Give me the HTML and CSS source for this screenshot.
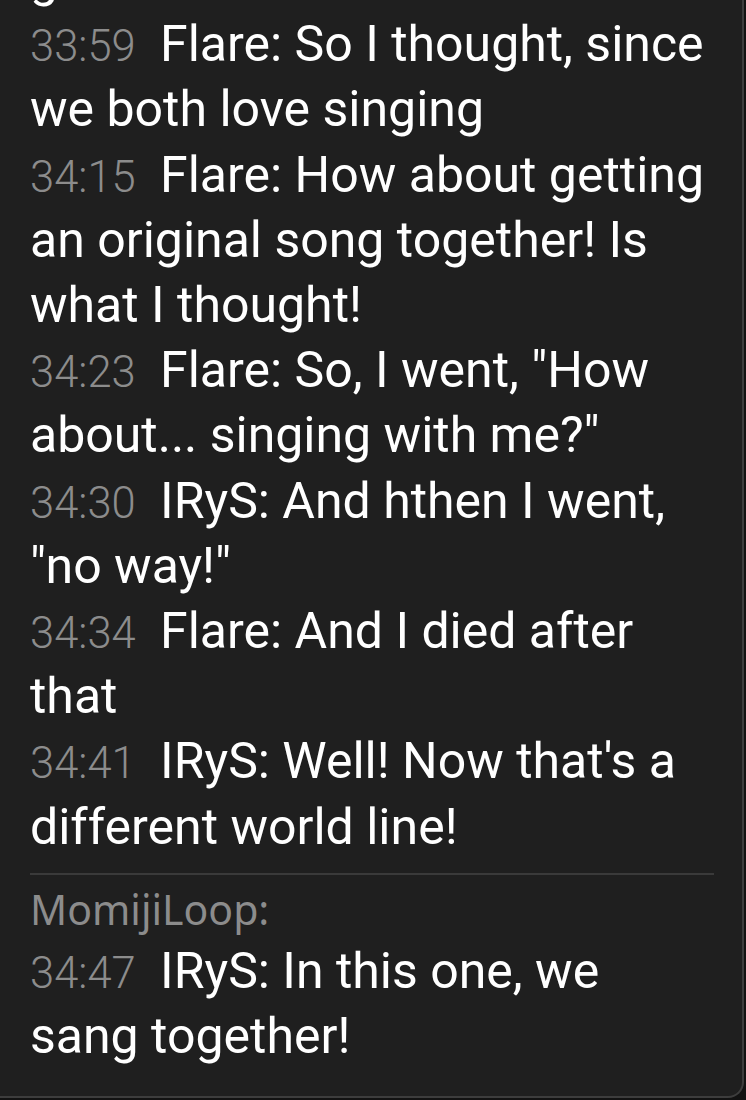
FILE: index.html
```html
<!DOCTYPE html>
<html>
<head>
<meta charset="utf-8">
<link rel="stylesheet" href="styles.css">
</head>
<body>
<div class="panel">
  <div class="group">
    <div class="msg prev">get it</div>
    <div class="msg"><span class="ts">33:59</span> Flare: So I thought, since we both love singing</div>
    <div class="msg"><span class="ts">34:15</span> Flare: How about getting an original song together! Is what I thought!</div>
    <div class="msg"><span class="ts">34:23</span> Flare: So, I went, "How about... singing with me?"</div>
    <div class="msg"><span class="ts">34:30</span> IRyS: And hthen I went, "no way!"</div>
    <div class="msg"><span class="ts">34:34</span> Flare: And I died after that</div>
    <div class="msg"><span class="ts">34:41</span> IRyS: Well! Now that's a different world line!</div>
  </div>
  <div class="group second">
    <div class="author">MomijiLoop:</div>
    <div class="msg"><span class="ts">34:47</span> IRyS: In this one, we sang together!</div>
  </div>
</div>
</body>
</html>
```
FILE: styles.css
```css
html, body {
  margin: 0;
  padding: 0;
  background: #121212;
  height: 1100px;
  overflow: hidden;
}
.panel {
  display: flow-root;
  box-sizing: border-box;
  width: 744px;
  height: 1098px;
  background: #1f1f1f;
  border-right: 2px solid #3d3d3d;
  border-bottom: 2px solid #3d3d3d;
  border-bottom-right-radius: 16px;
  padding: 0 28px 0 30px;
  font-family: Roboto, "Liberation Sans", sans-serif;
  color: #ffffff;
}
.group {
  padding-bottom: 13px;
}
.prev {
  margin-top: -53px;
}
.msg {
  font-size: 50px;
  line-height: 65.2px;
}
.ts {
  color: #8c8c8c;
  font-size: 43.5px;
  font-weight: 300;
  line-height: 1;
  margin-right: 12px;
}
.second {
  border-top: 2px solid #3a3a3a;
  padding-top: 4px;
}
.author {
  font-family: "Noto Sans", "Open Sans", sans-serif;
  color: #8c8c8c;
  font-size: 41px;
  line-height: 60px;
}
```
